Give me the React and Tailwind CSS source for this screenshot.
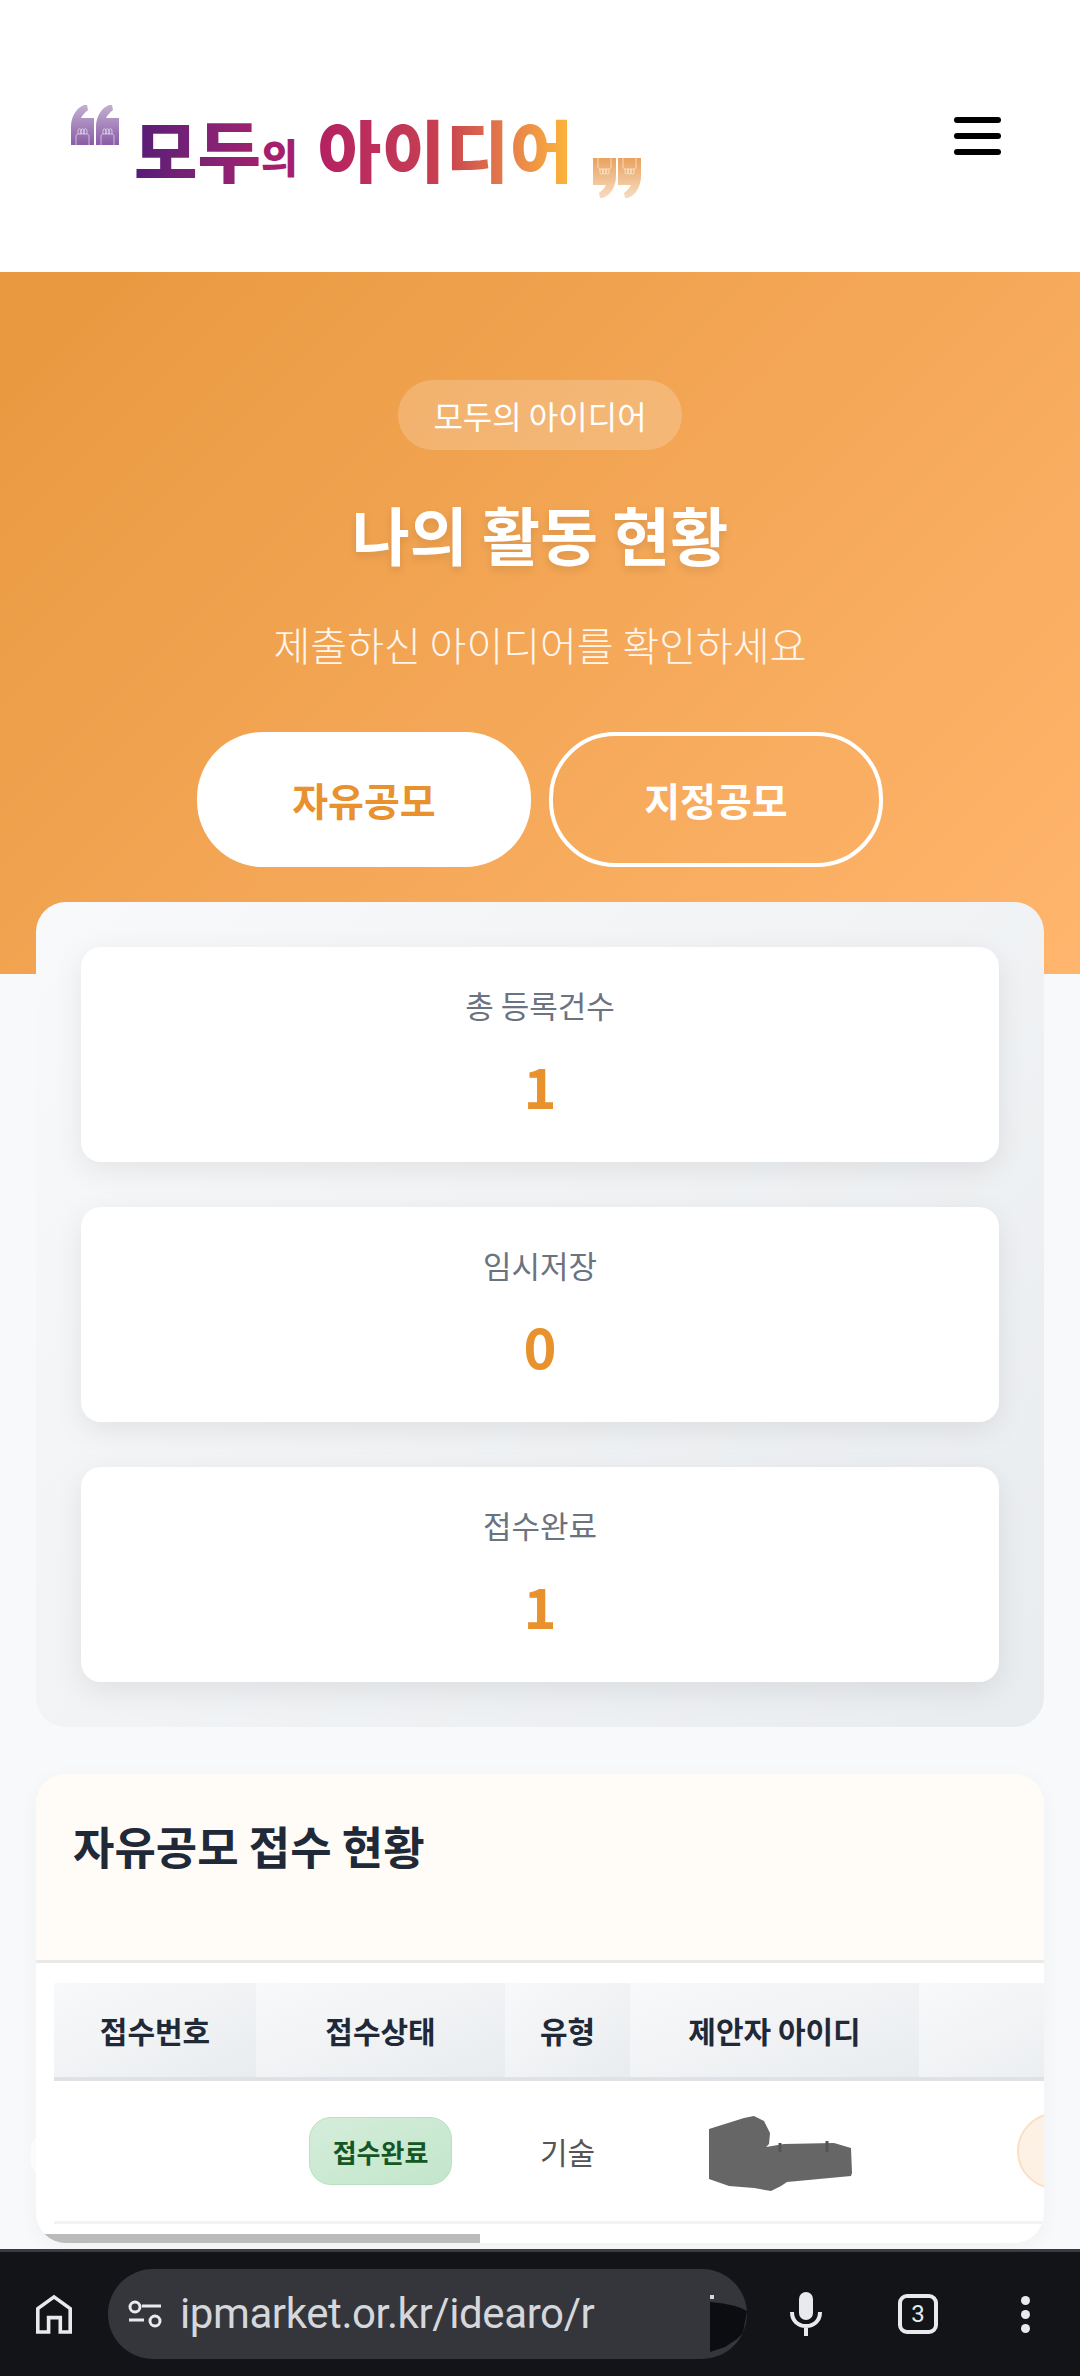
import React from "react";

const KR = "font-['Noto_Sans_CJK_KR','Noto_Sans',sans-serif]";

// one comma of the logo's quote marks, with the small fist drawn into its foot
const QuoteComma = ({ x, fill }) => (
    <g transform={`translate(${x} 0)`}>
        <path d="M0 40V22C0 12 5 3 13 0h3l1 5c-4 3-6 6-7 8h13v27z" fill={fill} />
        <path d="M5 40V31c0-1 1-2 2-2h9c1 0 2 1 2 2v9" stroke="#fff" strokeOpacity=".7" strokeWidth=".8" fill="none" />
        <path d="M7 29v-3c0-3 3-3 3 0v3M10 29v-3c0-3 3-3 3 0v3M13 29v-3c0-3 3-3 3 0v3" stroke="#fff" strokeOpacity=".7" strokeWidth=".8" fill="none" />
    </g>
);

const QuoteMark = ({ id, from, to, flip = false, className = "" }) => (
    <svg viewBox="0 0 49 40" className={className} style={flip ? { transform: "rotate(180deg)" } : undefined}>
        <defs>
            <linearGradient id={id} x1="0" y1="0" x2="0" y2="1">
                <stop offset="0" stopColor={from} />
                <stop offset="1" stopColor={to} />
            </linearGradient>
        </defs>
        <QuoteComma x={0} fill={`url(#${id})`} />
        <QuoteComma x={25} fill={`url(#${id})`} />
    </svg>
);

const Logo = () => (
    <div className="flex items-start">
        <QuoteMark id="quote-open" from="#c3afd2" to="#8a5ca6" className="w-[49px] h-[40px] shrink-0" />
        <div className={`${KR} font-black flex items-end ml-[14px] mt-[13px] h-[66px] leading-none whitespace-nowrap`}>
            <span className="text-[69px] bg-gradient-to-r from-[#571b78] to-[#a31f6f] bg-clip-text text-transparent">모두</span>
            <span className="text-[40px] text-[#a51f6e] mb-[8px]">의</span>
            <span className="text-[69px] ml-[20px] tracking-[0.5px] bg-gradient-to-r from-[#b41f62] via-[#c9414f] to-[#ffb936] bg-clip-text text-transparent">아이디어</span>
        </div>
        <QuoteMark id="quote-close" from="#f7dcc2" to="#e9a25c" flip className="w-[49px] h-[40px] shrink-0 ml-[18px] mt-[53px]" />
    </div>
);

const StatCard = ({ label, value }) => (
    <div className="h-[215px] bg-white rounded-[20px] shadow-[0_8px_30px_rgba(0,0,0,0.08)] flex flex-col items-center">
        <div className="mt-[36px] text-[31px] leading-[44px] text-[#6b7280]">{label}</div>
        <div className="mt-[23px] text-[56px] leading-[70px] font-bold text-[#e8912d]">{value}</div>
    </div>
);

const columns = [
    { label: "접수번호", width: "w-[202px]" },
    { label: "접수상태", width: "w-[249px]" },
    { label: "유형", width: "w-[125px]" },
    { label: "제안자 아이디", width: "w-[289px]" },
    { label: "", width: "w-[200px]" },
];

const App = () => {
    return (
        <div className={`${KR} w-[1080px] h-[2376px] flex flex-col overflow-hidden bg-[#f8f9fa]`}>
            <div className="flex-1 min-h-0 overflow-hidden">
                {/* Header */}
                <header className="h-[272px] bg-white flex items-start justify-between pl-[71px] pr-[79px] pt-[105px]">
                    <Logo />
                    <div className="flex flex-col gap-[10px] mt-[12px]">
                        <span className="block w-[47px] h-[6px] bg-black rounded-full" />
                        <span className="block w-[47px] h-[6px] bg-black rounded-full" />
                        <span className="block w-[47px] h-[6px] bg-black rounded-full" />
                    </div>
                </header>

                {/* Hero */}
                <section className="h-[702px] bg-[linear-gradient(135deg,#e8983e,#ffb56d)] flex flex-col items-center pt-[108px]">
                    <div className="h-[70px] w-[284px] rounded-full bg-white/20 flex items-center justify-center text-[32px] text-white">모두의 아이디어</div>
                    <h1 className="mt-[43px] text-[63px] leading-[80px] font-bold text-white [text-shadow:0_4px_8px_rgba(0,0,0,0.1)]">나의 활동 현황</h1>
                    <p className="mt-[41px] text-[40px] leading-[60px] font-light text-white/90">제출하신 아이디어를 확인하세요</p>
                    <div className="mt-[58px] flex gap-[18px]">
                        <button className="w-[334px] h-[135px] rounded-[66px] bg-white text-[39px] font-semibold text-[#e8912d]">자유공모</button>
                        <button className="w-[334px] h-[135px] rounded-[66px] border-[4px] border-white text-[39px] font-semibold text-white">지정공모</button>
                    </div>
                </section>

                {/* Stats */}
                <section className="relative -mt-[72px] mx-[36px] rounded-[30px] bg-[linear-gradient(135deg,#f8f9fa,#e9ecef)] px-[45px] py-[45px] flex flex-col gap-[45px]">
                    <StatCard label="총 등록건수" value="1" />
                    <StatCard label="임시저장" value="0" />
                    <StatCard label="접수완료" value="1" />
                </section>

                {/* Table card */}
                <section className="relative mt-[47px] mx-[36px] h-[469px]">
                    <span className="absolute -left-[5px] top-[356px] w-[40px] h-[50px] rounded-full bg-white" />
                    <div className="relative h-full rounded-[30px] bg-white overflow-hidden shadow-[0_4px_20px_rgba(0,0,0,0.04)]">
                        <div className="h-[189px] bg-[#fffcf7] border-b-[3px] border-[#e9e9e9] pl-[37px] pt-[40px]">
                            <h2 className="text-[45px] leading-[64px] font-bold text-[#1f2937]">자유공모 접수 현황</h2>
                        </div>
                        <div className="pl-[18px] pt-[20px] overflow-hidden">
                            <div className="flex w-[1065px] border-b-[4px] border-[#dee2e6] h-[98px]">
                                {columns.map((col) => (
                                    <div key={col.label} className={`${col.width} shrink-0 bg-gradient-to-br from-[#f8f9fa] to-[#e9ecef] flex items-center justify-center text-[30px] font-semibold text-[#1f2937]`}>
                                        {col.label}
                                    </div>
                                ))}
                            </div>
                            <div className="flex w-[1065px] h-[143px] border-b-[3px] border-[#f3f3f3] items-center text-[30px] text-[#555555]">
                                <div className="w-[202px] shrink-0" />
                                <div className="w-[249px] shrink-0 flex justify-center">
                                    <span className="w-[143px] h-[68px] rounded-[22px] border border-[#b9e0c0] bg-gradient-to-br from-[#d4edda] to-[#c3e6cb] flex items-center justify-center text-[26px] font-bold text-[#155724]">접수완료</span>
                                </div>
                                <div className="w-[125px] shrink-0 text-center">기술</div>
                                <div className="w-[289px] shrink-0 pl-[79px] pt-[5px]">
                                    {/* hand-drawn redaction over the id */}
                                    <svg viewBox="0 0 143 75" className="block w-[143px] h-[75px]">
                                        <path d="M0 13 35 2 45 0 55 5 61 17 60 28 57 31 75 28 125 27 142 32 143 57 142 60 110 63 78 66 72 70 62 75 45 72 20 70 0 63z" fill="#666666" />
                                        <path d="M118 25V36M71 27V36" stroke="#555555" strokeWidth="3" />
                                    </svg>
                                </div>
                                <div className="w-[200px] shrink-0 pl-[98px]">
                                    <span className="block w-[120px] h-[76px] rounded-[38px] border-2 border-[#fbdfc2] bg-[#fdf1e6]" />
                                </div>
                            </div>
                        </div>
                        <div className="absolute left-0 bottom-0 w-[444px] h-[9px] bg-[#bbbbbb]" />
                    </div>
                </section>
            </div>

            {/* Browser bar */}
            <footer className="h-[127px] shrink-0 bg-[#131418] border-t-[3px] border-[#3a3c42] flex items-center font-['Roboto',sans-serif]">
                <svg viewBox="0 0 40 44" className="w-[36px] h-[40px] ml-[36px] shrink-0" fill="none" stroke="#e8eaed" strokeWidth="4">
                    <path d="M2 42V16L20 3l18 13v26H27V26H14v16z" />
                </svg>
                <div className="relative ml-[36px] w-[639px] h-[90px] rounded-[45px] bg-[#34363c] overflow-hidden flex items-center pl-[20px]">
                    <svg viewBox="0 0 34 28" className="w-[34px] h-[28px] shrink-0" fill="none" stroke="#e8eaed" strokeWidth="3">
                        <circle cx="7" cy="7" r="5" />
                        <path d="M14 6h19M1 20h15" />
                        <circle cx="27" cy="21" r="5" />
                    </svg>
                    <span className="ml-[18px] text-[42px] leading-none tracking-[-0.4px] text-[#d6d7db] whitespace-nowrap">ipmarket.or.kr/idearo/r</span>
                    <svg viewBox="0 0 40 90" className="absolute right-0 top-0 w-[40px] h-[90px]">
                        <path d="M3 33C15 34 30 36 40 42L36 64 30 70 18 78 3 83z" fill="#0c0d10" />
                        <rect x="3" y="26" width="4" height="4" fill="#d6d7db" />
                    </svg>
                </div>
                <svg viewBox="0 0 32 44" className="w-[32px] h-[44px] ml-[43px] shrink-0" fill="none">
                    <rect x="9" y="0" width="14" height="28" rx="7" fill="#e8eaed" />
                    <path d="M2 20c0 9 6 14 14 14s14-5 14-14M16 34v10" stroke="#e8eaed" strokeWidth="4" />
                </svg>
                <div className="ml-[76px] w-[40px] h-[40px] rounded-[9px] border-[4px] border-[#e8eaed] flex items-center justify-center text-[24px] leading-none text-[#e8eaed] shrink-0">3</div>
                <div className="ml-[83px] flex flex-col gap-[5px] shrink-0">
                    <span className="block w-[9px] h-[9px] rounded-full bg-[#e8eaed]" />
                    <span className="block w-[9px] h-[9px] rounded-full bg-[#e8eaed]" />
                    <span className="block w-[9px] h-[9px] rounded-full bg-[#e8eaed]" />
                </div>
            </footer>
        </div>
    );
};

export default App;
